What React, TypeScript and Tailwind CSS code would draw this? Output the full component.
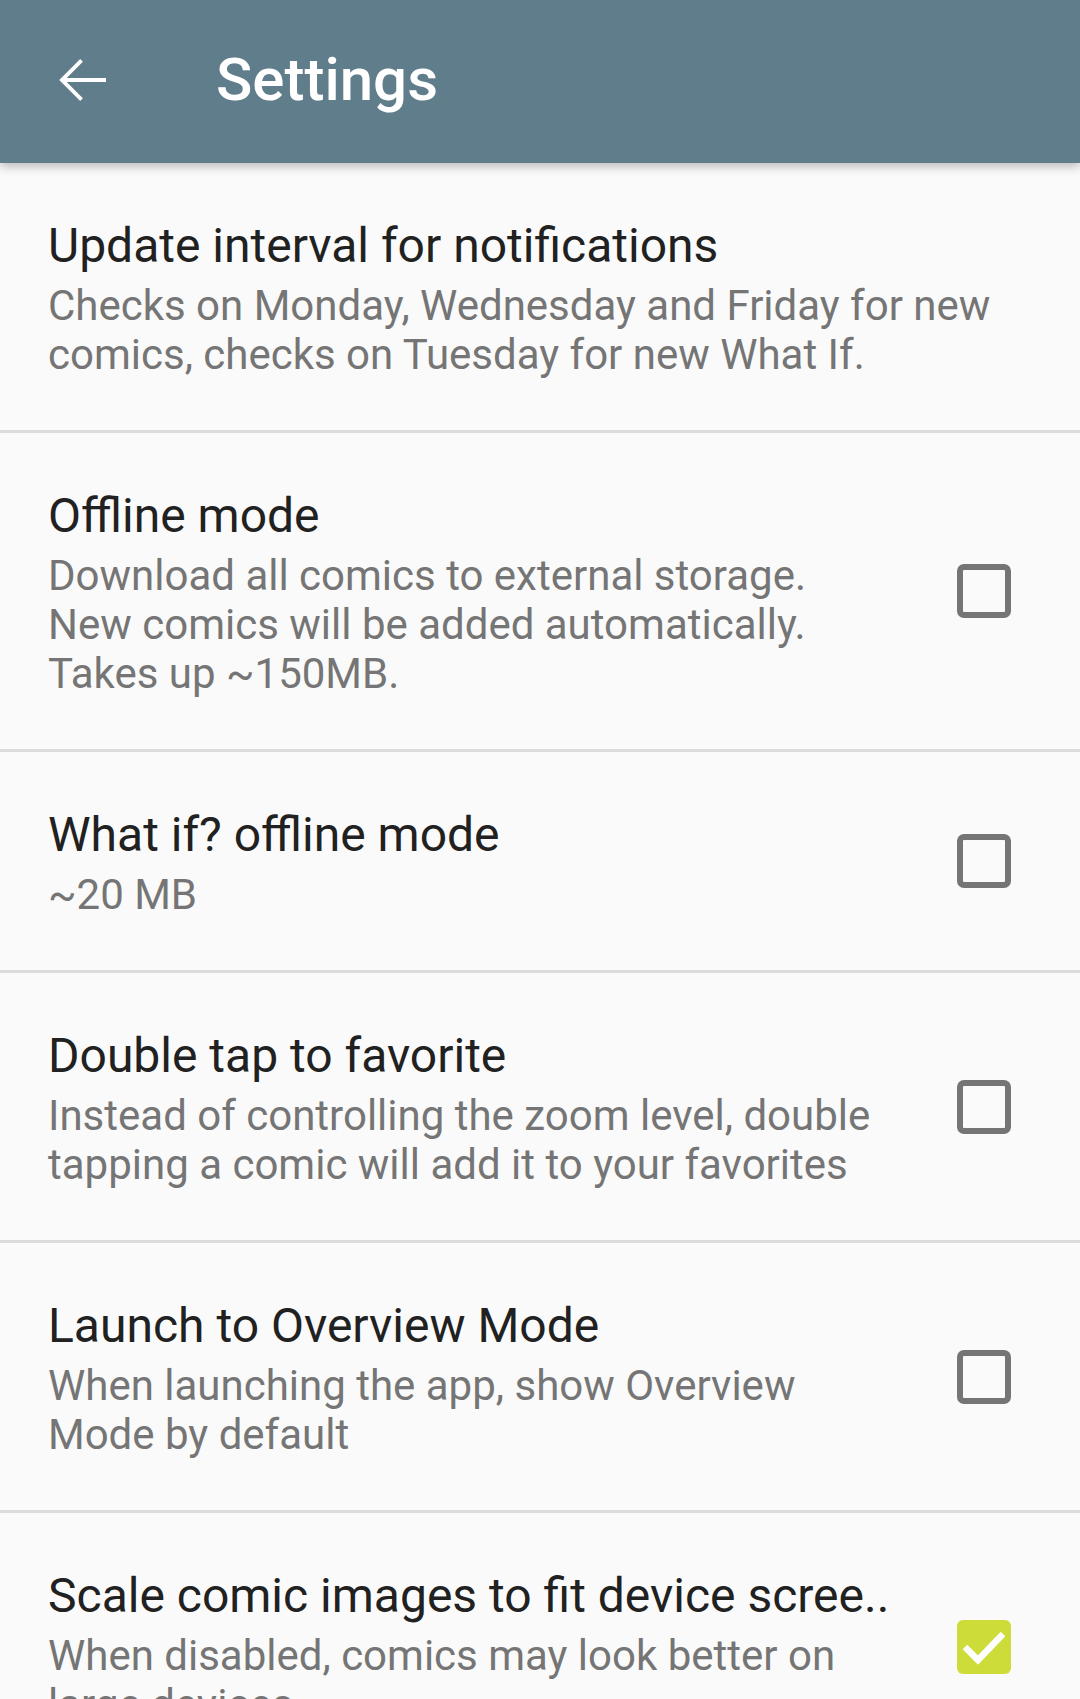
import type { ReactNode } from "react";

type Pref = {
  title: string;
  summary: ReactNode;
  checkbox?: "off" | "on";
};

const prefs: Pref[] = [
  {
    title: "Update interval for notifications",
    summary:
      "Checks on Monday, Wednesday and Friday for new comics, checks on Tuesday for new What If.",
  },
  {
    title: "Offline mode",
    summary:
      "Download all comics to external storage. New comics will be added automatically. Takes up ~150MB.",
    checkbox: "off",
  },
  { title: "What if? offline mode", summary: "~20 MB", checkbox: "off" },
  {
    title: "Double tap to favorite",
    summary:
      "Instead of controlling the zoom level, double tapping a comic will add it to your favorites",
    checkbox: "off",
  },
  {
    title: "Launch to Overview Mode",
    summary: "When launching the app, show Overview Mode by default",
    checkbox: "off",
  },
  {
    title: "Scale comic images to fit device scree..",
    summary: "When disabled, comics may look better on large devices",
    checkbox: "on",
  },
];

function Checkbox({ checked }: { checked: boolean }) {
  if (checked) {
    return (
      <div className="h-[54px] w-[54px] shrink-0 rounded-[6px] bg-[#cddc39]">
        <svg viewBox="0 0 54 54" className="h-full w-full">
          <polyline
            points="8,27 21,40 46,14"
            fill="none"
            stroke="#ffffff"
            strokeWidth="6.5"
          />
        </svg>
      </div>
    );
  }
  return (
    <div className="h-[54px] w-[54px] shrink-0 rounded-[7px] border-[6px] border-[#757575]" />
  );
}

export default function App() {
  return (
    <div className="h-[1699px] w-[1080px] overflow-hidden bg-[#fafafa] font-['Roboto','Liberation_Sans',sans-serif]">
      <header className="relative z-10 flex h-[163px] items-center bg-[#607d8b] pb-[3px] shadow-[0_3px_10px_rgba(0,0,0,0.28)]">
        <div className="ml-[46px] flex h-[72px] w-[72px] items-center justify-center">
          <svg viewBox="0 0 24 24" className="h-[72px] w-[72px]" fill="#ffffff">
            <path d="M20 11.3H6.9l5.4-5.4-0.9-0.9L4.4 12l7 7 0.9-0.9-5.4-5.4H20z" />
          </svg>
        </div>
        <h1 className="ml-[98px] text-[60px] font-medium leading-none text-white">
          Settings
        </h1>
      </header>

      <main>
        {prefs.map((pref, index) => (
          <div
            key={`${pref.title}-${index}`}
            className="flex items-center border-b-[3px] border-[#dcdcdc] pb-[51px] pl-[48px] pr-[69px] pt-[55px]"
          >
            <div className={pref.checkbox ? "w-[837px] shrink-0" : "min-w-0 flex-1"}>
              <p className="whitespace-nowrap text-[48px] leading-[56px] text-[#212121]">
                {pref.title}
              </p>
              <p className="mt-[7px] text-[42px] leading-[49px] text-[#757575]">
                {pref.summary}
              </p>
            </div>
            {pref.checkbox && (
              <div className="-mt-[4px] ml-[72px]">
                <Checkbox checked={pref.checkbox === "on"} />
              </div>
            )}
          </div>
        ))}
      </main>
    </div>
  );
}
